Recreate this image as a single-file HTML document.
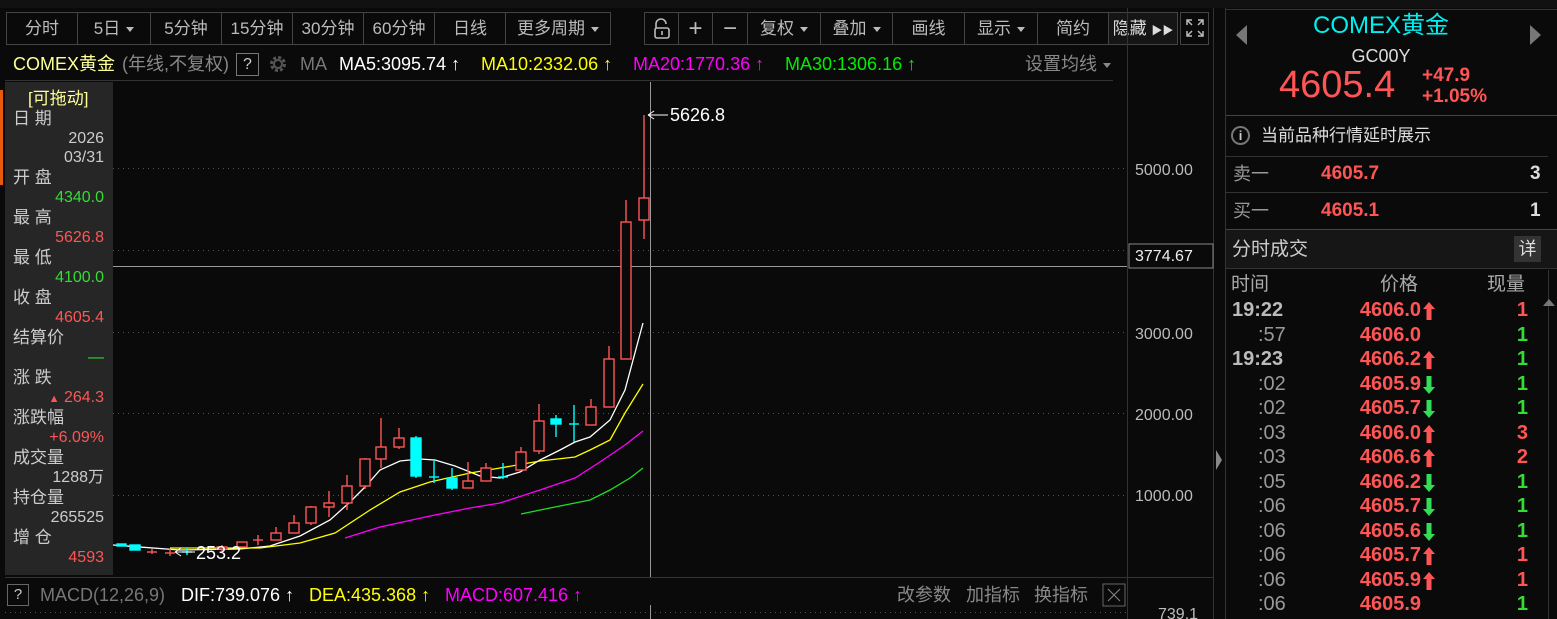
<!DOCTYPE html>
<html><head><meta charset="utf-8"><style>
*{margin:0;padding:0;box-sizing:border-box}
body{width:1557px;height:619px;background:#0a0a0a;overflow:hidden;position:relative;font-family:"Liberation Sans","Noto Sans CJK SC",sans-serif;color:#ccc}
.a{position:absolute;white-space:nowrap}
.btn{position:absolute;top:12px;height:33px;border:1px solid #444;color:#bbb;font-size:17px;line-height:31px;text-align:center}
.tri{display:inline-block;width:0;height:0;border-left:4px solid transparent;border-right:4px solid transparent;border-top:5px solid #bbb;vertical-align:middle;margin-left:6px}
.lab{position:absolute;left:13px;font-size:17px;color:#ccc;line-height:20px}
.val{position:absolute;right:1453px;font-size:16px;line-height:20px;text-align:right}
.r{color:#ff5555}.g{color:#33dd33}
.m{position:absolute;top:53px;font-size:18px;line-height:22px;white-space:nowrap}
.mm{position:absolute;top:584px;font-size:18px;line-height:22px;white-space:nowrap}
.row{position:absolute;left:1226px;width:310px;height:24px;font-size:20px;font-weight:bold;line-height:24px}
.row .t{position:absolute;left:6px;color:#bbb}
.row .t2{position:absolute;left:32px;color:#999;font-weight:normal}
.row .p{position:absolute;right:115px;color:#ff5555}
.row svg{position:absolute;left:197px;top:4px}
.row .q{position:absolute;right:8px}
</style></head><body>
<div class="a" style="left:0;top:0;width:1557px;height:8px;background:#111"></div>
<div class="a" style="left:0;top:90px;width:3px;height:95px;background:#e8590c"></div>

<div class="btn" style="left:6px;width:72px">分时</div>
<div class="btn" style="left:77px;width:74px">5日<span class="tri"></span></div>
<div class="btn" style="left:150px;width:72px">5分钟</div>
<div class="btn" style="left:221px;width:72px">15分钟</div>
<div class="btn" style="left:292px;width:72px">30分钟</div>
<div class="btn" style="left:363px;width:72px">60分钟</div>
<div class="btn" style="left:434px;width:72px">日线</div>
<div class="btn" style="left:505px;width:106px">更多周期<span class="tri"></span></div>
<div class="btn" style="left:644px;width:35px"><svg width="20" height="24" viewBox="0 0 20 24" style="margin-top:4px"><path d="M4 11V7a5 5 0 0 1 10 0" fill="none" stroke="#bbb" stroke-width="1.6"/><rect x="3" y="11" width="14" height="10" rx="2" fill="none" stroke="#bbb" stroke-width="1.6"/><line x1="10" y1="14" x2="10" y2="18" stroke="#bbb" stroke-width="1.6"/></svg></div>
<div class="btn" style="left:678px;width:35px;font-size:24px">+</div>
<div class="btn" style="left:712px;width:36px;font-size:24px">−</div>
<div class="btn" style="left:747px;width:74px">复权<span class="tri"></span></div>
<div class="btn" style="left:820px;width:73px">叠加<span class="tri"></span></div>
<div class="btn" style="left:892px;width:73px">画线</div>
<div class="btn" style="left:964px;width:74px">显示<span class="tri"></span></div>
<div class="btn" style="left:1037px;width:72px">简约</div>
<div class="btn" style="left:1108px;width:70px;color:#ddd;background:#151515">隐藏 <span style="font-size:11px">▶▶</span></div>
<div class="btn" style="left:1180px;width:29px"><svg width="20" height="20" viewBox="0 0 20 20" style="margin-top:5px" fill="none" stroke="#bbb" stroke-width="1.5"><path d="M2 7V2h5M2 2l5 5M13 2h5v5M18 2l-5 5M2 13v5h5M2 18l5-5M13 18h5v-5M18 18l-5-5"/></svg></div>

<div class="m" style="left:13px;color:#ffff99">COMEX黄金</div>
<div class="m" style="left:122px;color:#888">(年线,不复权)</div>
<div class="a" style="left:236px;top:53px;width:23px;height:23px;border:1px solid #777;color:#ccc;text-align:center;line-height:21px;font-size:16px">?</div>
<svg class="a" style="left:268px;top:54px" width="20" height="20" viewBox="0 0 20 20"><circle cx="10" cy="10" r="6.5" fill="none" stroke="#555" stroke-width="3" stroke-dasharray="3 2.1"/><circle cx="10" cy="10" r="4" fill="none" stroke="#555" stroke-width="2"/></svg>
<div class="m" style="left:300px;color:#777">MA</div>
<div class="m" style="left:339px;color:#fff">MA5:3095.74 ↑</div>
<div class="m" style="left:481px;color:#ffff00">MA10:2332.06 ↑</div>
<div class="m" style="left:633px;color:#ff00ff">MA20:1770.36 ↑</div>
<div class="m" style="left:785px;color:#00ee00">MA30:1306.16 ↑</div>
<div class="a" style="left:1025px;top:53px;font-size:18px;color:#888;line-height:22px">设置均线<span class="tri" style="border-top-color:#888"></span></div>
<div class="a" style="left:5px;top:80px;width:1108px;height:1px;background:#333"></div>

<svg class="a" style="left:0;top:0" width="1557" height="619">
<g stroke="#555" stroke-dasharray="1,4" stroke-width="1">
<line x1="113" y1="168.5" x2="1127" y2="168.5"/><line x1="113" y1="250.5" x2="1127" y2="250.5"/><line x1="113" y1="332.5" x2="1127" y2="332.5"/><line x1="113" y1="413.5" x2="1127" y2="413.5"/><line x1="113" y1="495.5" x2="1127" y2="495.5"/>
<line x1="5" y1="612.5" x2="1127" y2="612.5"/>
</g>
<line x1="1127.5" y1="8" x2="1127.5" y2="619" stroke="#333"/>
<line x1="5" y1="577.5" x2="1213" y2="577.5" stroke="#333"/>
<line x1="1213.5" y1="8" x2="1213.5" y2="619" stroke="#333"/>
<line x1="1225.5" y1="8" x2="1225.5" y2="619" stroke="#333"/>
<line x1="113" y1="266.5" x2="1127" y2="266.5" stroke="#999"/>
<line x1="650.5" y1="82" x2="650.5" y2="577" stroke="#999"/>
<line x1="650.5" y1="605" x2="650.5" y2="619" stroke="#999"/>
<g stroke-width="1.3" fill="none">
<polyline stroke="#fff" points="113,545 180,550 240,549 270,546 300,536 330,520 350,502 365,487 380,470 400,461 420,459 435,460 455,466 480,476 500,478 520,472 540,460 560,450 575,442 590,437 610,420 625,390 643,323"/>
<polyline stroke="#ffff00" points="170,548 260,548 300,543 335,533 370,510 400,492 430,482 470,473 500,468 540,461 575,457 590,450 610,440 625,413 643,384"/>
<polyline stroke="#ff00ff" points="345,538 380,527 430,516 470,508 500,503 540,490 575,478 600,462 625,445 643,431"/>
<polyline stroke="#22dd22" points="521,514 550,508 590,500 610,490 630,478 643,468"/>
</g>
<g stroke="#ff5555" stroke-width="1.4" fill="#0a0a0a">
<line x1="152" y1="549" x2="152" y2="554"/><line x1="147" y1="552" x2="157" y2="552"/>
<line x1="170" y1="549" x2="170" y2="556"/><line x1="165" y1="553" x2="175" y2="553"/>
<line x1="222" y1="545" x2="222" y2="551"/><rect x="217" y="547" width="10" height="2"/>
<rect x="237" y="542" width="10" height="5"/>
<line x1="258" y1="535" x2="258" y2="545"/><line x1="253" y1="540" x2="263" y2="540"/>
<line x1="276" y1="527" x2="276" y2="533"/><rect x="271" y="533" width="10" height="7"/>
<line x1="294" y1="515" x2="294" y2="523"/><rect x="289" y="523" width="10" height="10"/>
<line x1="311" y1="506" x2="311" y2="525"/><rect x="306" y="507" width="10" height="16"/>
<line x1="329" y1="491" x2="329" y2="517"/><rect x="324" y="503" width="10" height="4"/>
<line x1="347" y1="475" x2="347" y2="510"/><rect x="342" y="486" width="10" height="17"/>
<line x1="365" y1="458" x2="365" y2="489"/><rect x="360" y="459" width="10" height="27"/>
<line x1="381" y1="418" x2="381" y2="468"/><rect x="376" y="447" width="10" height="12"/>
<line x1="399" y1="428" x2="399" y2="449"/><rect x="394" y="438" width="10" height="9"/>
<line x1="468" y1="462" x2="468" y2="481"/><rect x="463" y="481" width="10" height="7"/>
<line x1="486" y1="463" x2="486" y2="468"/><rect x="481" y="468" width="10" height="13"/>
<line x1="521" y1="447" x2="521" y2="452"/><rect x="516" y="452" width="10" height="18"/>
<line x1="539" y1="404" x2="539" y2="454"/><rect x="534" y="421" width="10" height="30"/>
<line x1="591" y1="399" x2="591" y2="407"/><rect x="586" y="407" width="10" height="18"/>
<line x1="609" y1="346" x2="609" y2="359"/><rect x="604" y="359" width="10" height="48"/>
<line x1="626" y1="200" x2="626" y2="222"/><rect x="621" y="222" width="10" height="137"/>
<line x1="644" y1="115" x2="644" y2="239"/><rect x="639" y="198" width="10" height="22"/>
</g>
<g stroke="#00ffff" stroke-width="1.4" fill="#00ffff">
<rect x="117" y="544" width="9" height="2"/>
<rect x="130" y="545" width="10" height="5"/>
<line x1="187" y1="548" x2="187" y2="555"/><line x1="182" y1="552" x2="192" y2="552"/>
<line x1="416" y1="436" x2="416" y2="478"/><rect x="411" y="438" width="10" height="38"/>
<line x1="434" y1="460" x2="434" y2="483"/><line x1="429" y1="477" x2="439" y2="477"/>
<line x1="452" y1="468" x2="452" y2="490"/><rect x="447" y="478" width="10" height="10"/>
<line x1="503" y1="463" x2="503" y2="479"/><line x1="498" y1="477" x2="508" y2="477"/>
<line x1="556" y1="415" x2="556" y2="437"/><rect x="551" y="419" width="10" height="5"/>
<line x1="574" y1="405" x2="574" y2="442"/><line x1="569" y1="424" x2="579" y2="424"/>
</g>
<path d="M648 115h20M648 115l6-4M648 115l6 4" stroke="#fff" stroke-width="1" fill="none"/>
<path d="M175 552h20M175 552l6-4M175 552l6 4" stroke="#fff" stroke-width="1" fill="none"/>
<text x="670" y="121" fill="#fff" font-size="18" font-family="Liberation Sans">5626.8</text>
<text x="196" y="559" fill="#fff" font-size="18" font-family="Liberation Sans">253.2</text>
<g fill="#bbb" font-size="16" font-family="Liberation Sans">
<text x="1135" y="175">5000.00</text><text x="1135" y="339">3000.00</text><text x="1135" y="420">2000.00</text><text x="1135" y="501">1000.00</text><text x="1158" y="619">739.1</text>
</g>
<rect x="1129" y="244" width="84" height="24" fill="#0a0a0a" stroke="#888"/>
<text x="1135" y="261" fill="#eee" font-size="16" font-family="Liberation Sans">3774.67</text>
<path d="M1216 450l6 10-6 10z" fill="#888"/>
<rect x="1103" y="584" width="22" height="22" fill="none" stroke="#666"/>
<path d="M1108 589l12 12M1120 589l-12 12" stroke="#888"/>
</svg>

<div class="a" style="left:5px;top:82px;width:108px;height:493px;background:#262626"></div>
<div class="lab" style="top:89px;left:28px;color:#ffff99">[可拖动]</div>
<div class="lab" style="top:109px">日 期</div>
<div class="val" style="top:129px;color:#ccc">2026</div>
<div class="val" style="top:148px;color:#ccc">03/31</div>
<div class="lab" style="top:168px">开 盘</div>
<div class="val g" style="top:188px">4340.0</div>
<div class="lab" style="top:208px">最 高</div>
<div class="val r" style="top:228px">5626.8</div>
<div class="lab" style="top:248px">最 低</div>
<div class="val g" style="top:268px">4100.0</div>
<div class="lab" style="top:288px">收 盘</div>
<div class="val r" style="top:308px">4605.4</div>
<div class="lab" style="top:328px">结算价</div>
<div class="val g" style="top:348px">—</div>
<div class="lab" style="top:368px">涨 跌</div>
<div class="val r" style="top:388px"><span style="font-size:11px">▲</span> 264.3</div>
<div class="lab" style="top:408px">涨跌幅</div>
<div class="val r" style="top:428px">+6.09%</div>
<div class="lab" style="top:448px">成交量</div>
<div class="val" style="top:468px;color:#ccc">1288万</div>
<div class="lab" style="top:488px">持仓量</div>
<div class="val" style="top:508px;color:#ccc">265525</div>
<div class="lab" style="top:528px">增 仓</div>
<div class="val r" style="top:548px">4593</div>

<div class="a" style="left:7px;top:584px;width:22px;height:22px;border:1px solid #666;color:#ccc;font-size:15px;text-align:center;line-height:20px">?</div>
<div class="mm" style="left:40px;color:#777">MACD(12,26,9)</div>
<div class="mm" style="left:181px;color:#fff">DIF:739.076 ↑</div>
<div class="mm" style="left:309px;color:#ffff00">DEA:435.368 ↑</div>
<div class="mm" style="left:445px;color:#ff00ff">MACD:607.416 ↑</div>
<div class="mm" style="left:897px;color:#888">改参数</div>
<div class="mm" style="left:966px;color:#888">加指标</div>
<div class="mm" style="left:1034px;color:#888">换指标</div>

<div class="a" style="left:1226px;top:9px;width:331px;height:1px;background:#333"></div>
<div class="a" style="left:1236px;top:25px;width:0;height:0;border-top:10px solid transparent;border-bottom:10px solid transparent;border-right:11px solid #777"></div>
<div class="a" style="left:1530px;top:25px;width:0;height:0;border-top:10px solid transparent;border-bottom:10px solid transparent;border-left:11px solid #777"></div>
<div class="a" style="left:1226px;top:11px;width:310px;text-align:center;font-size:24px;color:#00f0f0;line-height:30px">COMEX黄金</div>
<div class="a" style="left:1226px;top:45px;width:310px;text-align:center;font-size:18px;color:#ddd;line-height:22px">GC00Y</div>
<div class="a" style="left:1279px;top:64px;font-size:38px;color:#ff5555;line-height:42px">4605.4</div>
<div class="a" style="left:1422px;top:65px;font-size:19px;color:#ff5555;font-weight:bold;line-height:21px">+47.9<br>+1.05%</div>
<div class="a" style="left:1226px;top:115px;width:331px;height:1px;background:#444"></div>
<div class="a" style="left:1231px;top:126px;width:19px;height:19px;border:2px solid #777;border-radius:50%;color:#ccc;font-size:13px;text-align:center;line-height:15px;font-weight:bold">i</div>
<div class="a" style="left:1261px;top:125px;font-size:17px;color:#ddd;line-height:22px">当前品种行情延时展示</div>
<div class="a" style="left:1226px;top:156px;width:322px;height:1px;background:#333"></div>
<div class="a" style="left:1233px;top:162px;font-size:18px;color:#999;line-height:24px">卖一</div>
<div class="a" style="left:1321px;top:162px;font-size:19px;color:#ff5555;font-weight:bold;line-height:24px">4605.7</div>
<div class="a" style="left:1530px;top:162px;font-size:19px;color:#ddd;font-weight:bold;line-height:24px">3</div>
<div class="a" style="left:1226px;top:192px;width:322px;height:1px;background:#333"></div>
<div class="a" style="left:1233px;top:199px;font-size:18px;color:#999;line-height:24px">买一</div>
<div class="a" style="left:1321px;top:199px;font-size:19px;color:#ff5555;font-weight:bold;line-height:24px">4605.1</div>
<div class="a" style="left:1530px;top:199px;font-size:19px;color:#ddd;font-weight:bold;line-height:24px">1</div>
<div class="a" style="left:1226px;top:229px;width:331px;height:40px;background:#161616;border-top:1px solid #444;border-bottom:1px solid #333"></div>
<div class="a" style="left:1232px;top:238px;font-size:19px;color:#ccc;line-height:24px">分时成交</div>
<div class="a" style="left:1514px;top:236px;width:27px;height:26px;background:#333;color:#ddd;font-size:18px;text-align:center;line-height:26px">详</div>
<div class="a" style="left:1231px;top:274px;font-size:19px;color:#aaa;line-height:22px">时间</div>
<div class="a" style="left:1380px;top:274px;font-size:19px;color:#aaa;line-height:22px">价格</div>
<div class="a" style="left:1487px;top:274px;font-size:19px;color:#aaa;line-height:22px">现量</div>
<div class="a" style="left:1548px;top:270px;width:1px;height:349px;background:#333"></div>
<div class="a" style="left:1543px;top:299px;width:0;height:0;border-left:6px solid transparent;border-right:6px solid transparent;border-bottom:7px solid #777"></div>

<svg width="0" height="0" style="position:absolute"><defs>
<symbol id="up" viewBox="0 0 12 18"><path d="M6 0L12 7H8.5V18H3.5V7H0z"/></symbol>
<symbol id="dn" viewBox="0 0 12 18"><path d="M6 18L12 11H8.5V0H3.5V11H0z"/></symbol>
</defs></svg>

<div class="row" style="top:298px"><span class="t">19:22</span><span class="p">4606.0</span><svg width="12" height="18" fill="#ff5555"><use href="#up"/></svg><span class="q r">1</span></div>
<div class="row" style="top:323px"><span class="t2">:57</span><span class="p">4606.0</span><span class="q g">1</span></div>
<div class="row" style="top:347px"><span class="t">19:23</span><span class="p">4606.2</span><svg width="12" height="18" fill="#ff5555"><use href="#up"/></svg><span class="q g">1</span></div>
<div class="row" style="top:372px"><span class="t2">:02</span><span class="p">4605.9</span><svg width="12" height="18" fill="#33dd55"><use href="#dn"/></svg><span class="q g">1</span></div>
<div class="row" style="top:396px"><span class="t2">:02</span><span class="p">4605.7</span><svg width="12" height="18" fill="#33dd55"><use href="#dn"/></svg><span class="q g">1</span></div>
<div class="row" style="top:421px"><span class="t2">:03</span><span class="p">4606.0</span><svg width="12" height="18" fill="#ff5555"><use href="#up"/></svg><span class="q r">3</span></div>
<div class="row" style="top:445px"><span class="t2">:03</span><span class="p">4606.6</span><svg width="12" height="18" fill="#ff5555"><use href="#up"/></svg><span class="q r">2</span></div>
<div class="row" style="top:470px"><span class="t2">:05</span><span class="p">4606.2</span><svg width="12" height="18" fill="#33dd55"><use href="#dn"/></svg><span class="q g">1</span></div>
<div class="row" style="top:494px"><span class="t2">:06</span><span class="p">4605.7</span><svg width="12" height="18" fill="#33dd55"><use href="#dn"/></svg><span class="q g">1</span></div>
<div class="row" style="top:519px"><span class="t2">:06</span><span class="p">4605.6</span><svg width="12" height="18" fill="#33dd55"><use href="#dn"/></svg><span class="q g">1</span></div>
<div class="row" style="top:543px"><span class="t2">:06</span><span class="p">4605.7</span><svg width="12" height="18" fill="#ff5555"><use href="#up"/></svg><span class="q r">1</span></div>
<div class="row" style="top:568px"><span class="t2">:06</span><span class="p">4605.9</span><svg width="12" height="18" fill="#ff5555"><use href="#up"/></svg><span class="q r">1</span></div>
<div class="row" style="top:592px"><span class="t2">:06</span><span class="p">4605.9</span><span class="q g">1</span></div>
</body></html>
